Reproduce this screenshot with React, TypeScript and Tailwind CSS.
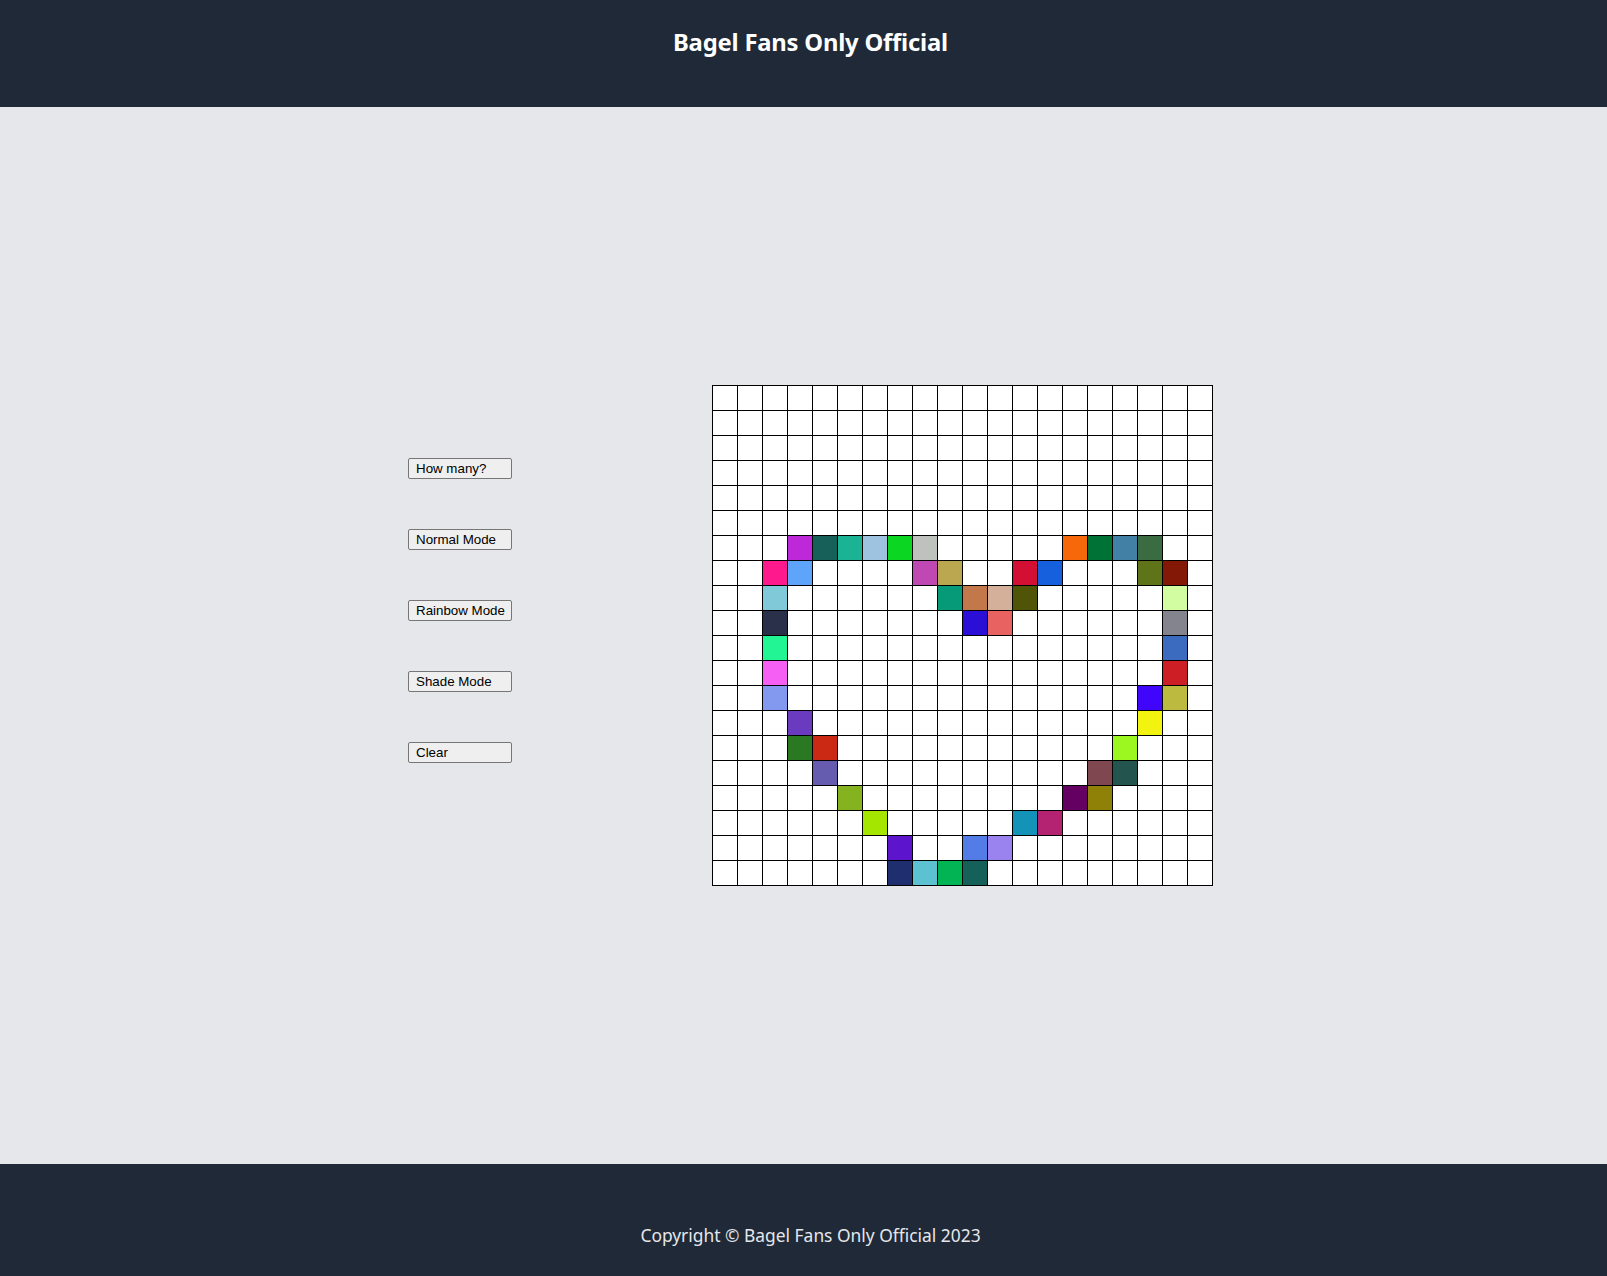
import React from "react";

const colored: Record<string, string> = {
  "6-3": "#bd28d9", "6-4": "#17605a", "6-5": "#1ab394", "6-6": "#9dc3e1", "6-7": "#0bd622", "6-8": "#bdc3bc",
  "6-14": "#f7680b", "6-15": "#007236", "6-16": "#4280a6", "6-17": "#3b6b41",
  "7-2": "#fe1a8d", "7-3": "#5ea4fa", "7-8": "#bf48b3", "7-9": "#baa74f", "7-12": "#d31034", "7-13": "#165fdd",
  "7-17": "#5f7318", "7-18": "#821805",
  "8-2": "#80c9d9", "8-9": "#069a78", "8-10": "#c3784b", "8-11": "#d4b09a", "8-12": "#505406", "8-18": "#d3fda1",
  "9-2": "#2a2f4a", "9-10": "#2c0fd6", "9-11": "#e86262", "9-18": "#84848f",
  "10-2": "#22f594", "10-18": "#3a6bbf",
  "11-2": "#f65ff4", "11-18": "#cd1e25",
  "12-2": "#8399f0", "12-17": "#3f06fb", "12-18": "#bdba40",
  "13-3": "#6a3bbf", "13-17": "#f2f40f",
  "14-3": "#2a7821", "14-4": "#cb2914", "14-16": "#9cf61f",
  "15-4": "#665caf", "15-15": "#7f4850", "15-16": "#23554e",
  "16-5": "#85b31f", "16-14": "#650063", "16-15": "#8f8108",
  "17-6": "#a5e600", "17-12": "#1393b8", "17-13": "#b42371",
  "18-7": "#5c14cc", "18-10": "#547ce6", "18-11": "#9b83ef",
  "19-7": "#1e2e6f", "19-8": "#5cc1d0", "19-9": "#02b454", "19-10": "#156058",
};

const buttons = ["How many?", "Normal Mode", "Rainbow Mode", "Shade Mode", "Clear"];

export default function App() {
  const cells: React.ReactNode[] = [];
  for (let r = 0; r < 20; r++) {
    for (let c = 0; c < 20; c++) {
      const col = colored[`${r}-${c}`] ?? "#ffffff";
      cells.push(
        <div
          key={`${r}-${c}`}
          className="w-[25px] h-[25px] border-r border-b border-black box-border"
          style={{ backgroundColor: col }}
        />
      );
    }
  }
  return (
    <div className="min-h-screen flex flex-col bg-[#e5e7eb]" style={{ fontFamily: '"Noto Sans", sans-serif' }}>
      <header className="h-[107px] bg-[#1f2937] flex justify-center pt-[24px] pl-[14px] shrink-0">
        <h1 className="text-white font-bold text-[23.8px] leading-[36px] tracking-[-0.2px] [font-family:'Noto_Sans',sans-serif]">
          Bagel Fans Only Official
        </h1>
      </header>
      <main className="flex-1 flex items-center pl-[408px]">
        <div className="flex flex-col gap-[50px] mb-[51px] w-[104px] shrink-0">
          {buttons.map((b) => (
            <button
              key={b}
              className="w-[104px] h-[21px] border border-[#767676] rounded-[2px] bg-[#efefef] text-black text-[13.33px] leading-[19px] text-left pl-[7px] pr-0 whitespace-nowrap [font-family:'Liberation_Sans',Arial,sans-serif]"
            >
              {b}
            </button>
          ))}
        </div>
        <div className="ml-[200px] grid grid-cols-[repeat(20,25px)] border-l border-t border-black w-[501px] shrink-0">
          {cells}
        </div>
      </main>
      <footer className="h-[112px] bg-[#1f2937] flex justify-center items-start pt-[57px] pl-[14px] shrink-0">
        <p className="text-[#e5e7eb] text-[17.4px] leading-[28px]">
          Copyright © Bagel Fans Only Official 2023
        </p>
      </footer>
    </div>
  );
}
